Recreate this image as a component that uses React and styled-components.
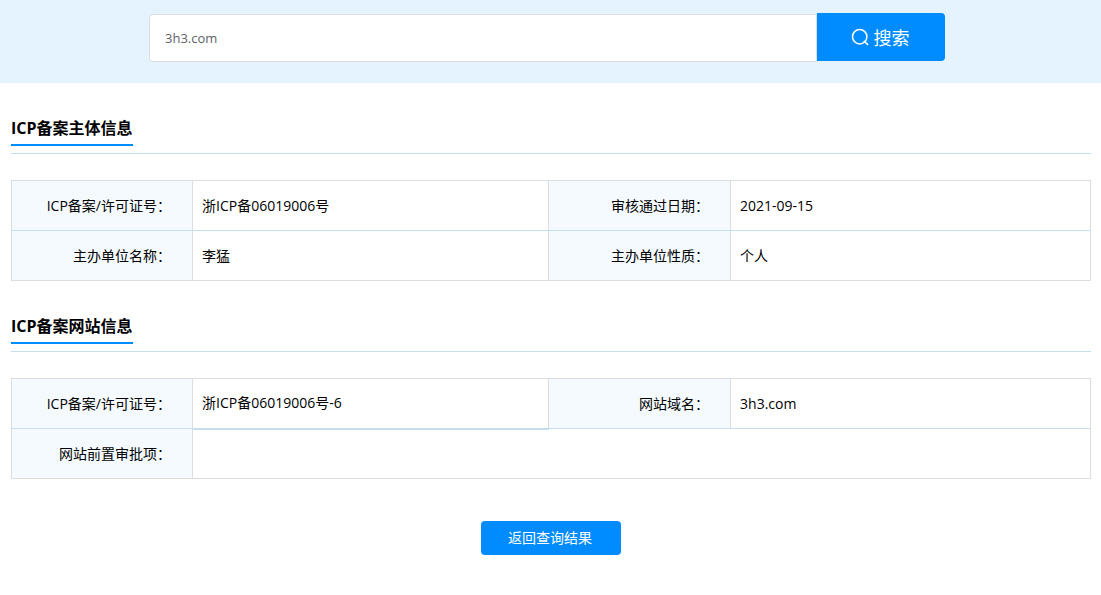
import React, { useState } from 'react';
import styled, { createGlobalStyle } from 'styled-components';

const GlobalStyle = createGlobalStyle`
* { box-sizing: border-box; }
body {
  margin: 0;
  background-color: #fff;
  color: #000;
  font-family: "Open Sans", "Noto Sans CJK SC", sans-serif;
  font-size: 14px;
  line-height: 20px;
}
button, input { font-family: inherit; }
`

const SearchBar = styled.form`
display: flex;
justify-content: center;
height: 83px;
padding: 13px 156px 0 149px;
background-color: #e5f3ff;
`

const SearchInput = styled.input`
flex: 1;
min-width: 0;
height: 48px;
margin-top: 1px;
padding: 0 15px;
border: 1px solid #dcdddd;
border-radius: 4px 0 0 4px;
background-color: #fff;
color: #606266;
font-size: 13px;
outline: none;
`

const SearchButton = styled.button`
display: flex;
align-items: center;
justify-content: center;
gap: 5px;
width: 128px;
height: 48px;
padding: 0 2px 0 0;
border: 0;
border-radius: 0 4px 4px 0;
background-color: #008cff;
color: #fff;
font-size: 18px;
cursor: pointer;
`

const Main = styled.main`
display: flex;
flex-direction: column;
padding: 32px 10px 0 11px;
`

const Section = styled.section`
margin-bottom: 32px;
`

const SectionHead = styled.div`
display: flex;
height: 39px;
margin-bottom: 26px;
border-bottom: 1px solid #c9deed;
`

const Title = styled.h2`
height: 31px;
margin: 0;
border-bottom: 2px solid #008cff;
font-size: 16px;
font-weight: 700;
line-height: 26px;
`

const Table = styled.table`
width: 100%;
table-layout: fixed;
border-collapse: collapse;
`

const LabelCol = styled.col`
width: ${props => props.$width}px;
`

const ValueCol = styled.col`
width: ${props => props.$width || 'auto'};
`

const Label = styled.th`
height: 50px;
padding: 0 21px 0 10px;
border: 1px solid #dcdddd;
border-bottom-color: ${props => props.$last ? '#dcdddd' : '#c6dff0'};
background-color: #f4faff;
font-weight: 400;
text-align: right;
`

const Value = styled.td`
height: 50px;
padding: 0 9px;
border: 1px solid #dcdddd;
border-bottom: ${props => props.$thick ? 2 : 1}px solid ${props => props.$last ? '#dcdddd' : '#c6dff0'};
`

const BackButton = styled.button`
align-self: center;
width: 140px;
height: 34px;
margin-top: 10px;
padding: 0 2px 2px 0;
border: 0;
border-radius: 4px;
background-color: #008cff;
color: #fff;
font-size: 14px;
cursor: pointer;
`

const subjectRows = [
    [
        { label: 'ICP备案/许可证号：', value: '浙ICP备06019006号' },
        { label: '审核通过日期：', value: '2021-09-15' },
    ],
    [
        { label: '主办单位名称：', value: '李猛' },
        { label: '主办单位性质：', value: '个人' },
    ],
]

const siteRows = [
    [
        { label: 'ICP备案/许可证号：', value: '浙ICP备06019006号-6', thick: true },
        { label: '网站域名：', value: '3h3.com' },
    ],
    [
        { label: '网站前置审批项：', value: '', span: 3 },
    ],
]

const SearchIcon = () => (
    <svg width="18" height="18" viewBox="0 0 18 18" fill="none" stroke="#fff" strokeWidth="1.5" aria-hidden="true">
        <circle cx="8.7" cy="8.7" r="7.2" />
        <path d="M13.2 13.4l3.4 3" strokeLinecap="round" />
    </svg>
)

const InfoSection = ({ title, rows }) => (
    <Section>
        <SectionHead><Title>{title}</Title></SectionHead>
        <Table>
            <colgroup>
                <LabelCol $width={181} />
                <ValueCol $width="33%" />
                <LabelCol $width={182} />
                <ValueCol />
            </colgroup>
            <tbody>
                {rows.map((row, i) => {
                    const last = i === rows.length - 1
                    return (
                        <tr key={i}>
                            {row.map(item => (
                                <React.Fragment key={item.label}>
                                    <Label scope="row" $last={last}>{item.label}</Label>
                                    <Value colSpan={item.span} $last={last} $thick={item.thick}>{item.value}</Value>
                                </React.Fragment>
                            ))}
                        </tr>
                    )
                })}
            </tbody>
        </Table>
    </Section>
)

const App = () => {
    const [domain, setDomain] = useState('3h3.com')

    return (
        <>
            <GlobalStyle />
            <SearchBar onSubmit={e => e.preventDefault()}>
                <SearchInput
                    type="text"
                    aria-label="域名"
                    value={domain}
                    onChange={e => setDomain(e.target.value)}
                />
                <SearchButton type="submit"><SearchIcon />搜索</SearchButton>
            </SearchBar>
            <Main>
                <InfoSection title="ICP备案主体信息" rows={subjectRows} />
                <InfoSection title="ICP备案网站信息" rows={siteRows} />
                <BackButton type="button">返回查询结果</BackButton>
            </Main>
        </>
    )
}

export default App
